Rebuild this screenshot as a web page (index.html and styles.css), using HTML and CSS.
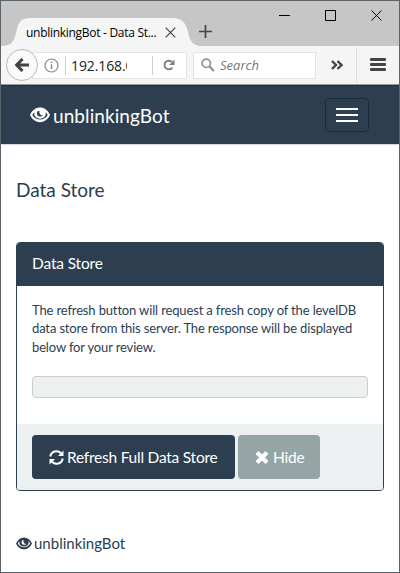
FILE: index.html
```html
<!DOCTYPE html>
<html lang="en">
<head>
<meta charset="utf-8">
<title>unblinkingBot - Data Store</title>
<link rel="stylesheet" href="styles.css">
</head>
<body>
<svg class="defs" width="0" height="0">
  <symbol id="eye" viewBox="0 0 20 16" preserveAspectRatio="none">
    <path fill="currentColor" fill-rule="evenodd" d="M0 8C2 3 6 .5 10 .5S18 3 20 8c-2 4.500-6 7.200-10 7.200S2 12.500 0 8ZM2.300 8c1.500 2.800 4.400 4.500 7.700 4.500s6.200-1.700 7.700-4.500c-.6-1.300-1.400-2.300-2.300-3 .3.800.4 1.400.4 2a5.800 4.700 0 0 1-11.600 0c0-.6.1-1.200.4-2C3.700 5.700 2.900 6.700 2.300 8ZM7.800 4C6 6.500 7.300 9.600 10.300 9.600c1.200 0 2-.3 2.700-1.100C10.600 8.600 8.900 7 9.400 4Z"/>
  </symbol>
</svg>
<div class="window">
  <header class="titlebar">
    <div class="tab">
      <svg class="tab-shape" width="200" height="28" viewBox="0 0 200 28"><path fill="#f5f5f5" d="M0 28C10 28 13 24 15 15C17 5 19 0 29 0H171C181 0 185 5 187 14C189 23 192 28 200 28Z"/></svg>
      <span class="tab-title">unblinkingBot - Data St...</span>
      <svg class="tab-close" width="11" height="11" viewBox="0 0 11 11"><path d="M.7.700 10.300 10.300M10.300.700.700 10.300" stroke="#444" stroke-width="1.200"/></svg>
    </div>
    <svg class="plus" width="13" height="13" viewBox="0 0 13 13"><path d="M6.500 0V13M0 6.500H13" stroke="#444" stroke-width="1.700"/></svg>
    <div class="controls">
      <svg width="11" height="11" viewBox="0 0 11 11"><path d="M0 5.500H11" stroke="#000"/></svg>
      <svg width="11" height="11" viewBox="0 0 11 11"><path d="M.5.500H10.500V10.500H.5Z" fill="none" stroke="#000"/></svg>
      <svg width="11" height="11" viewBox="0 0 11 11"><path d="M.5.500 10.500 10.500M10.500.500.500 10.500" stroke="#000"/></svg>
    </div>
  </header>
  <div class="toolbar">
    <div class="back"><svg width="14" height="14" viewBox="0 0 14 14"><path d="M7.500 1 1.700 7l5.800 6M2 7H14" fill="none" stroke="#444" stroke-width="3"/></svg></div>
    <div class="address">
      <svg class="info" width="15" height="15" viewBox="0 0 15 15"><circle cx="7.500" cy="7.500" r="6.500" fill="none" stroke="#888" stroke-width="1.200"/><path d="M7.500 6.300V11M7.500 3.500V5" stroke="#888" stroke-width="1.500"/></svg>
      <span class="url">192.168.0</span>
      <span class="reload"><svg width="12" height="12" viewBox="0 0 12 12"><path d="M9.300 8.600A4.300 4.300 0 1 1 8.800 2.900" fill="none" stroke="#808080" stroke-width="1.900"/><path d="M11.500.500V6H6Z" fill="#808080"/></svg></span>
    </div>
    <div class="search">
      <svg width="14" height="14" viewBox="0 0 14 14"><circle cx="5.300" cy="5.300" r="4.200" fill="none" stroke="#929292" stroke-width="1.700"/><path d="m8.300 8.300 4.700 4.700" stroke="#929292" stroke-width="2.300"/></svg>
      <span>Search</span>
    </div>
    <svg class="more" width="12" height="10" viewBox="0 0 12 10"><path d="M1 1 5 5 1 9M6.500 1l4 4-4 4" fill="none" stroke="#444" stroke-width="2.400"/></svg>
    <div class="menu"><i></i><i></i><i></i></div>
  </div>
  <nav class="navbar">
    <a class="brand"><svg width="20" height="16"><use href="#eye"/></svg><span>unblinkingBot</span></a>
    <div class="toggle"><i></i><i></i><i></i></div>
  </nav>
  <main>
    <h1>Data Store</h1>
    <section class="panel">
      <h2>Data Store</h2>
      <div class="panel-body">
        <p>The refresh button will request a fresh copy of the levelDB<br>data store from this server. The response will be displayed<br>below for your review.</p>
        <div class="well"></div>
      </div>
      <div class="panel-footer">
        <div class="btn primary"><svg width="15" height="15" viewBox="0 0 15 15"><path d="M1.300 6.500A6.200 6.200 0 0 1 12 3.200M13.700 8.500A6.200 6.200 0 0 1 3 11.800" fill="none" stroke="#fff" stroke-width="2"/><path d="M14.500.500V6H9ZM.5 14.500V9H6Z" fill="#fff"/></svg><span>Refresh Full Data Store</span></div>
        <div class="btn muted"><svg width="14" height="13" viewBox="0 0 14 13"><path d="m2 1.500 10 10M12 1.500l-10 10" stroke="#fff" stroke-width="4.200"/></svg><span>Hide</span></div>
      </div>
    </section>
  </main>
  <footer><svg width="16" height="13"><use href="#eye"/></svg><span>unblinkingBot</span></footer>
</div>
</body>
</html>
```
FILE: styles.css
```css
* { box-sizing: border-box; }
body { margin: 0; font-family: Lato, sans-serif; color: #2c3e50; }
svg { display: block; flex: none; }
span { white-space: nowrap; }
.defs { position: absolute; }
.window { width: 400px; height: 573px; border: 1px solid #5b646b; background: #fff; overflow: hidden; }
.titlebar { height: 45px; background: #c6c6c6; display: flex; align-items: flex-start; }
.tab { position: relative; width: 199px; height: 28px; margin-top: 17px; padding-left: 25px; display: flex; align-items: center; }
.tab-shape { position: absolute; left: 0; top: 0; }
.tab-title { position: relative; width: 130px; font: 12px "Open Sans", sans-serif; letter-spacing: -.29px; color: #000; }
.tab-close { position: relative; margin-left: 9px; }
.plus { margin-top: 24px; margin-left: -1px; }
.controls { display: flex; gap: 35px; margin: 9px 0 0 67px; }
.toolbar { height: 39px; background: #f5f5f5; border-bottom: 1px solid #999; display: flex; align-items: center; }
.back { position: relative; z-index: 1; width: 32px; height: 32px; margin-left: 5px; border: 1px solid #bbb; border-radius: 50%; background: #fafafa; display: flex; align-items: center; justify-content: center; }
.address { width: 155px; height: 27px; margin-left: -6px; padding-left: 11px; border: 1px solid #e3e3e3; background: #fff; display: flex; align-items: center; }
.url { width: 62px; height: 19px; margin-left: 6px; padding-left: 5px; border-left: 1px solid #ccc; overflow: hidden; font: 14px/19px "Open Sans", sans-serif; letter-spacing: -.1px; color: #222; }
.reload { height: 19px; margin-left: 25px; padding: 3px 0 0 10px; border-left: 1px solid #ccc; }
.search { width: 123px; height: 27px; margin-left: 6px; padding-left: 7px; border: 1px solid #e3e3e3; background: #fff; display: flex; align-items: center; gap: 5px; font: italic 13px "Open Sans", sans-serif; color: #777; }
.more { margin-left: 15px; }
.menu { width: 30px; height: 36px; margin-left: 13px; padding: 11px 0 0 13px; border-left: 1px solid #ddd; }
.menu i { display: block; width: 16px; height: 3px; margin-bottom: 2px; border-radius: 1px; background: #444; }
.navbar { height: 60px; padding: 0 30px 0 29px; background: #2c3e50; border-top: 1px solid #203040; border-bottom: 1px solid #d5d8dc; display: flex; align-items: center; justify-content: space-between; color: #fff; }
.brand { display: flex; align-items: center; gap: 3px; font-size: 19px; line-height: 24px; letter-spacing: .08px; }
.brand svg { margin-top: -1px; }
.brand span { margin-top: 1px; }
.toggle { width: 44px; height: 34px; padding: 9px 10px; border: 1px solid #1c2b3a; border-radius: 4px; }
.toggle i { display: block; height: 2px; margin-bottom: 4px; background: #fff; }
main { padding: 33px 15px 0; }
h1 { margin: 0 0 40px; font-size: 19px; font-weight: 400; line-height: 24px; }
.panel { height: 249px; border: 1px solid #2c3e50; border-radius: 4px; overflow: hidden; }
h2 { height: 43px; margin: 0; padding-left: 15px; background: #2c3e50; color: #fff; font-size: 15.500px; font-weight: 400; line-height: 40px; letter-spacing: -.15px; }
.panel-body { height: 138px; padding: 15px 15px 0; }
p { margin: 0 0 20px; font-size: 13px; line-height: 18.400px; letter-spacing: -.145px; white-space: nowrap; }
.well { height: 22px; border: 1px solid #ccc; border-radius: 4px; background: #ecf0f1; }
.panel-footer { height: 66px; padding: 11px 15px; background: #ecf0f1; display: flex; gap: 3px; }
.btn { height: 44px; border-radius: 4px; padding-left: 17px; display: flex; align-items: center; color: #fff; font-size: 15.500px; letter-spacing: -.24px; line-height: 20px; }
.primary { width: 203px; gap: 3px; background: #2c3e50; }
.muted { width: 82px; gap: 4px; background: #95a5a6; }
footer { display: flex; align-items: center; gap: 2px; margin: 42px 0 0 15px; font-size: 15px; line-height: 20px; }
```
